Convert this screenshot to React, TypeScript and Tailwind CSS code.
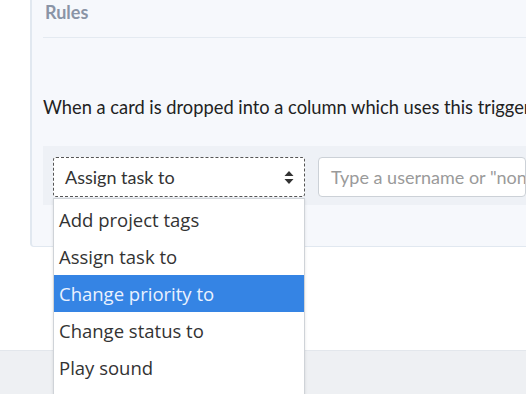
const options = [
  "Add project tags",
  "Assign task to",
  "Change priority to",
  "Change status to",
  "Play sound",
]

const SortIcon = () => (
  <svg width="10" height="15" viewBox="0 0 10 15" className="text-[#333]">
    <path d="M5 1 L9.5 6 H0.5 Z" fill="currentColor" />
    <path d="M5 14 L9.5 9 H0.5 Z" fill="currentColor" />
  </svg>
)

export default function App() {
  return (
    <div className="w-[526px] h-[394px] overflow-hidden bg-white flex flex-col font-['Lato',sans-serif]">
      <div className="h-[350px] shrink-0">
        {/* rules card */}
        <div className="ml-[30px] h-[247px] bg-[#f6f8fc] border-l-2 border-b border-[#e1e8f0] rounded-bl-[4px] pl-[11px]">
          <div className="pl-[2px] h-[25px] text-[18px] font-bold leading-[24px] text-[#8a94a6]">Rules</div>
          <div className="mt-[12px] border-t border-[#e4eaf1]" />
          <p className="mt-[57px] text-[18.3px] leading-[24px] text-[#222] whitespace-nowrap">
            When a card is dropped into a column which uses this trigger, then
          </p>
          <div className="mt-[27px] h-[59px] bg-[#eef1f6] pl-[10px] pt-[11px] flex gap-[13px]">
            <div className="relative">
              <div className="w-[252px] h-[40px] bg-white border border-dashed border-[#555] rounded-[3px] flex items-center justify-between pl-[11px] pr-[10px] text-[18px] text-[#333]">
                <span>Assign task to</span>
                <SortIcon />
              </div>
              {/* open dropdown */}
              <div className="absolute left-0 top-[41px] w-[252px] h-[200px] bg-white border border-[#cfd3d8] shadow-sm pt-[2px] font-['Open_Sans',sans-serif] text-[18.5px] z-10">
                {options.map((o) => (
                  <div
                    key={o}
                    className={
                      o === "Change priority to"
                        ? "h-[37px] flex items-center pl-[5px] bg-[#3584e4] text-[#eaf2ff]"
                        : "h-[37px] flex items-center pl-[5px] text-[#333]"
                    }
                  >
                    {o}
                  </div>
                ))}
              </div>
            </div>
            <div className="flex-1 h-[40px] bg-white border border-[#ccd1d7] rounded-[4px] flex items-center pl-[12px] text-[18px] text-[#9a9a9a] whitespace-nowrap overflow-hidden">
              Type a username or "none"
            </div>
          </div>
        </div>
      </div>
      <div className="flex-1 bg-[#eef0f3] border-t border-[#e3e7ec]" />
    </div>
  )
}
